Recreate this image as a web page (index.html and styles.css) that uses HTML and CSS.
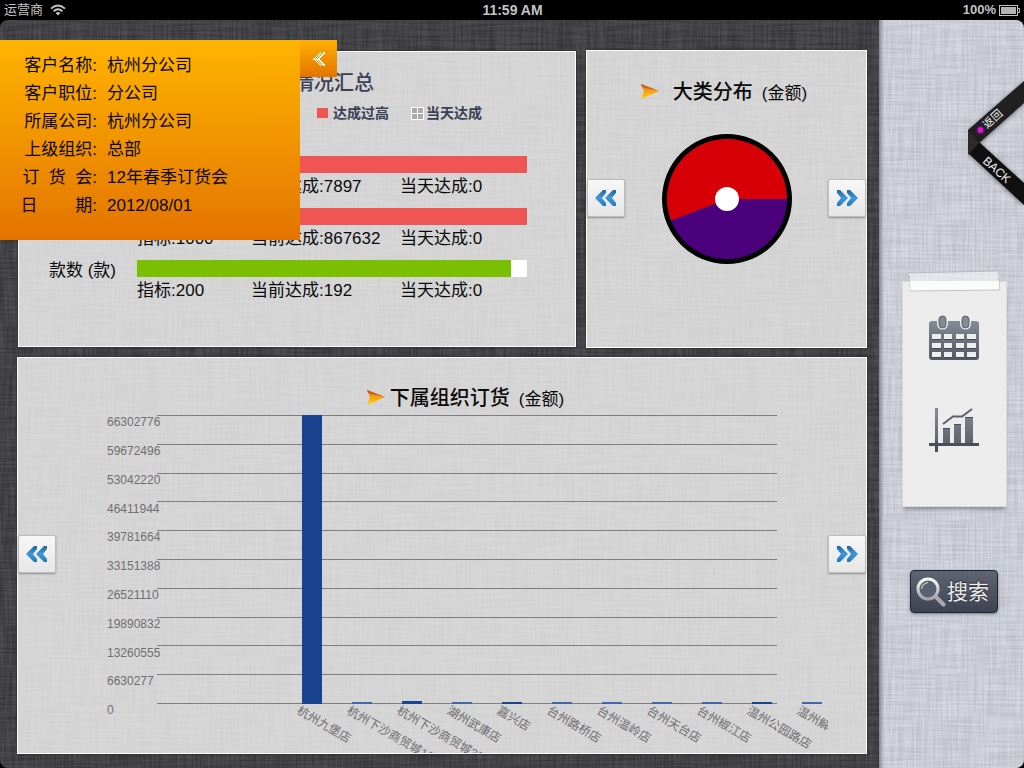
FILE: index.html
```html
<!DOCTYPE html>
<html lang="zh-CN">
<head>
<meta charset="utf-8">
<meta name="viewport" content="width=device-width, initial-scale=1">
<title>订货情况汇总</title>
<link rel="stylesheet" href="styles.css">
</head>
<body>
<header class="status">
  <div class="status-left"><span>运营商</span>
    <svg class="wifi" viewBox="0 0 16 12" aria-hidden="true"><path d="M1 4.6Q8-1.6 15 4.6M3.6 7.2Q8 3.4 12.4 7.2" fill="none" stroke="#c4c4c4" stroke-width="1.9"/><path d="M5.6 9Q8 7 10.4 9L8 11.6z" fill="#c4c4c4"/></svg>
  </div>
  <time class="clock">11:59 AM</time>
  <div class="status-right"><span>100%</span>
    <svg class="battery" viewBox="0 0 22 11" aria-hidden="true"><rect x=".5" y=".5" width="18" height="10" fill="none" stroke="#c4c4c4"/><rect x="2" y="2" width="15" height="7" fill="#b4b4b4"/><path d="M19 3.5h1.5v4H19" fill="none" stroke="#c4c4c4"/></svg>
  </div>
</header>

<div class="app">
  <main class="board">
    <section class="panel summary">
      <h2 class="summary-title">情况汇总</h2>
      <div class="legend">
        <span class="legend-item"><i class="swatch"></i>达成过高</span>
        <span class="legend-item today"><svg class="tiles" viewBox="0 0 13 13" aria-hidden="true"><path fill="#fff" d="M0 0h13v13H0z"/><path fill="#aaa" d="M1 1h5v5H1zM7 1h5v5H7zM1 7h5v5H1zM7 7h5v5H7z"/></svg>当天达成</span>
      </div>
      <div class="metric">
        <span class="metric-name"></span>
        <div class="track"><div class="fill over" style="width:100%"></div></div>
        <div class="figures"><span></span><span>当前达成:7897</span><span>当天达成:0</span></div>
      </div>
      <div class="metric">
        <span class="metric-name"></span>
        <div class="track"><div class="fill over" style="width:100%"></div></div>
        <div class="figures"><span>指标:1000</span><span>当前达成:867632</span><span>当天达成:0</span></div>
      </div>
      <div class="metric">
        <span class="metric-name">款数 (款)</span>
        <div class="track"><div class="fill" style="width:96%"></div></div>
        <div class="figures"><span>指标:200</span><span>当前达成:192</span><span>当天达成:0</span></div>
      </div>
    </section>

    <section class="panel slider">
      <button class="step" type="button" aria-label="上一个"><svg viewBox="0 0 22 18"><use href="#chevrons"/></svg></button>
      <div class="slide">
        <h2 class="heading spaced"><svg class="dart" viewBox="0 0 20 16" aria-hidden="true"><use href="#dart"/></svg><span>大类分布</span><small>(金额)</small></h2>
        <svg class="pie" viewBox="0 0 130 130" role="img" aria-label="大类分布">
          <circle cx="65" cy="65" r="65"/>
          <circle cx="65" cy="65" r="60" fill="#4b007c"/>
          <path fill="#d60006" d="M65 65H125A60 60 0 1 0 9 86.500z"/>
          <circle cx="65" cy="65" r="12" fill="#fff"/>
        </svg>
      </div>
      <button class="step" type="button" aria-label="下一个"><svg class="flip" viewBox="0 0 22 18"><use href="#chevrons"/></svg></button>
    </section>

    <section class="panel slider orders">
      <button class="step" type="button" aria-label="上一组"><svg viewBox="0 0 22 18"><use href="#chevrons"/></svg></button>
      <div class="slide">
        <h2 class="heading"><svg class="dart" viewBox="0 0 20 16" aria-hidden="true"><use href="#dart"/></svg><span>下属组织订货</span><small>(金额)</small></h2>
        <svg class="bars" viewBox="0 0 772 339" preserveAspectRatio="xMidYMin meet" role="img" aria-label="下属组织订货">
          <path class="grid-line" d="M101 1h620v1H101zM101 30h620v1H101zM101 59h620v1H101zM101 87h620v1H101zM101 116h620v1H101zM101 145h620v1H101zM101 174h620v1H101zM101 203h620v1H101zM101 231h620v1H101zM101 260h620v1H101zM101 289h620v1H101z"/>
          <g class="scale">
            <text x="51" y="12">66302776</text><text x="51" y="41">59672496</text><text x="51" y="70">53042220</text><text x="51" y="99">46411944</text><text x="51" y="127">39781664</text><text x="51" y="156">33151388</text><text x="51" y="185">26521110</text><text x="51" y="214">19890832</text><text x="51" y="243">13260555</text><text x="51" y="271">6630277</text><text x="51" y="300">0</text>
          </g>
          <path fill="#1a438f" d="M246 1h20v289h-20zM346 287h20v3h-20zM446 288h20v2h-20zM696 288h20v2h-20z"/>
          <path fill="#4067aa" d="M296 288h20v2h-20zM396 288h20v2h-20zM496 288h20v2h-20zM546 288h20v2h-20zM596 288h20v2h-20zM646 288h20v2h-20zM746 288h20v2h-20z"/>
          <g class="stores">
            <text transform="translate(240 299) rotate(30)">杭州九堡店</text>
            <text transform="translate(290 299) rotate(30)">杭州下沙商贸城1店</text>
            <text transform="translate(340 299) rotate(30)">杭州下沙商贸城3店</text>
            <text transform="translate(390 299) rotate(30)">湖州武康店</text>
            <text transform="translate(440 299) rotate(30)">嘉兴店</text>
            <text transform="translate(490 299) rotate(30)">台州路桥店</text>
            <text transform="translate(540 299) rotate(30)">台州温岭店</text>
            <text transform="translate(590 299) rotate(30)">台州天台店</text>
            <text transform="translate(640 299) rotate(30)">台州椒江店</text>
            <text transform="translate(690 299) rotate(30)">温州公园路店</text>
            <text transform="translate(740 299) rotate(30)">温州解</text>
          </g>
        </svg>
      </div>
      <button class="step" type="button" aria-label="下一组"><svg class="flip" viewBox="0 0 22 18"><use href="#chevrons"/></svg></button>
    </section>
  </main>

  <aside class="side">
    <nav class="note">
      <svg class="tape" viewBox="0 0 94 22" preserveAspectRatio="none" aria-hidden="true">
        <path fill="#fff" fill-opacity=".5" stroke="#aaa" stroke-opacity=".6" d="M1 3L92 1l-1 3 2 2-2 3 2 3-1 3 1 5L3 21l1-3-2-2 2-3-2-3 1-3-2-2z"/><path fill="#fff" fill-opacity=".6" d="M3 11h89v8L3 20z"/>
      </svg>
      <a class="tool" href="#calendar" aria-label="日历">
        <svg viewBox="0 0 50 46"><rect y="6" width="50" height="39" rx="3" fill="url(#steel)"/><path fill="#eee" d="M3 19h9v5H3zM15 19h8v5h-8zM27 19h8v5h-8zM38 19h9v5h-9zM3 28h9v5H3zM15 28h8v5h-8zM27 28h8v5h-8zM38 28h9v5h-9zM3 37h9v5H3zM15 37h8v5h-8zM27 37h8v5h-8zM38 37h9v5h-9z"/><path stroke="#454853" d="M3 24.500h9M15 24.500h8M27 24.500h8M38 24.500h9M3 33.500h9M15 33.500h8M27 33.500h8M38 33.500h9M3 42.500h9M15 42.500h8M27 42.500h8M38 42.500h9"/><path fill="#eee" d="M8 5h11v4a5.500 5.500 0 0 1-11 0zM31 5h11v4a5.500 5.500 0 0 1-11 0z"/><rect x="10" y="1" width="7" height="12" rx="3.500" fill="#858993" stroke="#5b5e69"/><rect x="33" y="1" width="7" height="12" rx="3.500" fill="#858993" stroke="#5b5e69"/></svg>
      </a>
      <a class="tool" href="#chart" aria-label="图表">
        <svg viewBox="0 0 50 46"><path fill="url(#steel)" d="M6 0h3v44H6zM14 20h7v16h-7zM25 16h7v20h-7zM36 9h8v27h-8z"/><path fill="#4b4e59" d="M0 35h50v3H0zM6 33h3v11H6zM14 20h7v1h-7zM25 16h7v1h-7zM36 9h8v1h-8z"/><path d="M14 16L24 8.500h9L43 1" fill="none" stroke="#5d606b" stroke-width="2"/></svg>
      </a>
    </nav>
    <button class="search" type="button">
      <svg viewBox="0 0 30 30" aria-hidden="true"><path d="M19 19l8.500 8.500" stroke="#aaa" stroke-width="4" stroke-linecap="round"/><circle cx="12" cy="12" r="10" fill="#59606f" stroke="url(#rim)" stroke-width="3"/><path d="M5.500 12A7 7 0 0 1 12 5.500" fill="none" stroke="#bbb" stroke-width="1.500"/></svg>
      <span>搜索</span>
    </button>
    <a class="ribbon" href="#back">
      <svg viewBox="0 0 56 126" aria-hidden="true">
        <g class="ribbon-shade"><path d="M0 73V66l11-4 45 41v22z" fill="#101011"/><path d="M0 73V50L56 1v22z" fill="#202021"/></g>
        <path d="M0 75V50l11 13z" fill="#2b2b2c"/>
        <circle cx="12.500" cy="50" r="3" fill="#e012dc"/><circle cx="12.500" cy="50" r="4" fill="none" stroke="#7d137b" stroke-opacity=".6"/>
        <text class="back-zh" transform="translate(19 49) rotate(-42)">返回</text>
        <text class="back-en" transform="translate(14 82) rotate(42)">BACK</text>
      </svg>
    </a>
  </aside>

  <section class="customer">
    <dl class="details">
      <dt>客户名称:</dt><dd>杭州分公司</dd>
      <dt>客户职位:</dt><dd>分公司</dd>
      <dt>所属公司:</dt><dd>杭州分公司</dd>
      <dt>上级组织:</dt><dd>总部</dd>
      <dt>订  货  会:</dt><dd>12年春季订货会</dd>
      <dt>日        期:</dt><dd>2012/08/01</dd>
    </dl>
    <button class="collapse" type="button" aria-label="收起"><svg viewBox="0 0 12 14"><path fill="#fff" d="M7 0h1v1h2V0h2v2h-1v1h-1v1H9v1H8v1H7v2h1v1h1v1h1v1h1v1h1v2h-2v-1H8v1H7v-1H6v-1H5v-1H4v-1H3V9H2V8H0V6h2V5h1V4h1V3h1V2h1V1h1z"/><path fill="#f0930a" d="M7 1h1v1H7zM9 1h1v1H9zM6 2h1v1H6zM8 2h1v1H8zM5 3h1v1H5zM7 3h1v1H7zM4 4h1v1H4zM6 4h1v1H6zM3 5h1v1H3zM5 5h1v1H5zM2 6h1v1H2zM4 6h1v1H4zM3 8h1v1H3zM5 8h1v1H5zM4 9h1v1H4zM6 9h1v1H6zM5 10h1v1H5zM7 10h1v1H7zM6 11h1v1H6zM8 11h1v1H8zM7 12h1v1H7z"/></svg></button>
  </section>
</div>

<svg class="defs" width="0" height="0" aria-hidden="true">
  <defs>
    <linearGradient id="blue" x2="0" y2="1"><stop stop-color="#1e6699"/><stop offset=".5" stop-color="#4098d8"/><stop offset="1" stop-color="#2478b8"/></linearGradient>
    <linearGradient id="flame" x2="0" y2="1"><stop stop-color="#d8601a"/><stop offset=".45" stop-color="#f2a010"/><stop offset="1" stop-color="#ffd400"/></linearGradient>
    <linearGradient id="steel" x2="0" y2="1"><stop stop-color="#858a95"/><stop offset="1" stop-color="#555863"/></linearGradient>
    <linearGradient id="rim" x2="0" y2="1"><stop stop-color="#fff"/><stop offset="1" stop-color="#a0a2a8"/></linearGradient>
    <path id="chevrons" fill="url(#blue)" d="M8 1h3v3L7 9l4 5v3H8L0 9zM18 1h3v3l-4 5 4 5v3h-3l-8-8z"/>
    <g id="dart"><path fill="url(#flame)" d="M1 0l18 7L1 15l3-8z"/><path fill="#c85b22" d="M1 0l18 7L2 3z"/></g>
  </defs>
</svg>
</body>
</html>
```
FILE: styles.css
```css
:root {
  --linen: url("data:image/svg+xml,%3Csvg xmlns='http://www.w3.org/2000/svg' width='300' height='300'%3E%3Cfilter id='h' x='0' y='0' width='1' height='1' color-interpolation-filters='sRGB'%3E%3CfeTurbulence type='fractalNoise' baseFrequency='.02 .5' numOctaves='2' seed='3' stitchTiles='stitch'/%3E%3CfeColorMatrix values='2.4 0 0 0 -.7 2.4 0 0 0 -.7 2.4 0 0 0 -.7 0 0 0 0 1'/%3E%3C/filter%3E%3Cfilter id='v' x='0' y='0' width='1' height='1' color-interpolation-filters='sRGB'%3E%3CfeTurbulence type='fractalNoise' baseFrequency='.5 .02' numOctaves='2' seed='8' stitchTiles='stitch'/%3E%3CfeColorMatrix values='2.4 0 0 0 -.7 2.4 0 0 0 -.7 2.4 0 0 0 -.7 0 0 0 0 1'/%3E%3C/filter%3E%3Crect width='300' height='300' filter='url(%23h)' opacity='.06'/%3E%3Crect width='300' height='300' filter='url(%23v)' opacity='.06'/%3E%3C/svg%3E");
}
* { box-sizing: border-box; }
html, body { height: 100%; margin: 0; }
body {
  display: flex;
  flex-direction: column;
  background: #000;
  color: #0a0a0a;
  font-family: "Liberation Sans", "Noto Sans CJK SC", sans-serif;
  font-size: 17px;
}
h2, dl, dd { margin: 0; }
button { padding: 0; font: inherit; cursor: pointer; }
svg { display: block; }
.defs { position: absolute; }

.status {
  display: grid;
  grid-template-columns: 1fr auto 1fr;
  align-items: center;
  height: 20px;
  padding: 0 3px 0 4px;
  color: #c4c4c4;
  font-size: 13px;
  line-height: 20px;
}
.status-left { display: flex; align-items: center; gap: 7px; }
.status-right { display: flex; align-items: center; justify-content: flex-end; gap: 3px; font-weight: bold; }
.clock { font-size: 14px; font-weight: bold; }
.wifi { width: 16px; height: 12px; }
.battery { width: 22px; height: 11px; }

.app {
  position: relative;
  flex: 1;
  display: flex;
  min-height: 0;
  border-radius: 8px;
  overflow: hidden;
}
.board {
  flex: 1;
  min-width: 0;
  display: grid;
  grid-template-columns: minmax(0, 1fr) 281px;
  grid-template-rows: minmax(0, 3fr) minmax(0, 4fr);
  gap: 9px;
  padding: 30px 12px 14px 17px;
  background: var(--linen), #3a393e;
}
.panel {
  min-width: 0;
  border: 1px solid #fff;
  background: linear-gradient(rgba(214,214,214,.75), rgba(214,214,214,.75)), var(--linen), #dadada;
  box-shadow: 0 0 2px #1c1c20;
}

.summary { margin: 1px 1px 1px 1px; padding: 16px 48px 0 23px; }
.summary-title {
  padding-left: 252px;
  color: #3a3f57;
  font-size: 20px;
  font-weight: 500;
  line-height: 30px;
}
.legend {
  display: flex;
  gap: 22px;
  margin-bottom: 28px;
  padding-left: 275px;
  color: #3a3f57;
  font-size: 14px;
  font-weight: bold;
  line-height: 30px;
}
.legend-item { display: flex; align-items: center; gap: 5px; }
.legend-item.today { gap: 2px; }
.swatch { width: 11px; height: 10px; background: #ef5552; }
.tiles { width: 13px; height: 13px; }
.metric {
  display: grid;
  grid-template-columns: 74px 1fr;
  column-gap: 21px;
  padding-bottom: 7px;
}
.metric-name { height: 17px; text-align: right; line-height: 22px; white-space: nowrap; }
.track { height: 17px; background: #fff; }
.fill { height: 100%; background: #7abf00; }
.fill.over { background: #ef5552; }
.figures {
  grid-column: 2;
  display: grid;
  grid-template-columns: 114px 149px 1fr;
  line-height: 28px;
  white-space: nowrap;
}

.slider { display: flex; align-items: center; }
.slide {
  flex: 1;
  align-self: stretch;
  min-width: 0;
  display: flex;
  flex-direction: column;
  align-items: center;
}
.step {
  display: grid;
  place-items: center;
  width: 38px;
  height: 38px;
  margin-bottom: 2px;
  border: 1px solid #bdbdbd;
  border-radius: 2px;
  background: linear-gradient(#f7f7f7, #e6e6e6);
  box-shadow: 0 1px 2px #8c8c8c;
}
.step svg { width: 22px; height: 18px; }
.flip { transform: scaleX(-1); }
.heading {
  display: flex;
  align-items: center;
  gap: 4px;
  padding-top: 24px;
  font-size: 20px;
  font-weight: 500;
  line-height: 32px;
  white-space: nowrap;
}
.heading small { padding: 4px 0 0 5px; font-size: 17px; font-weight: 400; line-height: 30px; }
.heading.spaced { gap: 13px; padding-right: 6px; }
.heading.spaced small { padding-left: 0; margin-left: -4px; }
.dart { width: 20px; height: 16px; }
.pie { width: 130px; height: 130px; margin-top: 25px; }
.orders { grid-column: 1 / -1; }
.orders .heading { height: 56px; padding-left: 46px; }
.bars { flex: 1; width: 100%; min-height: 0; overflow: hidden; }
.grid-line { fill: #7e7e7e; }
.scale, .stores { fill: #6e6e6e; font-size: 12px; }

.side {
  position: relative;
  width: 145px;
  display: flex;
  flex-direction: column;
  align-items: center;
  padding: 250px 0 0 5px;
  background:
    linear-gradient(90deg, #85868d 0, rgba(133,134,141,0) 5px),
    var(--linen),
    #d2d4df;
}
.note {
  display: flex;
  flex-direction: column;
  align-items: center;
  gap: 47px;
  width: 105px;
  margin-top: 11px;
  padding-bottom: 52px;
  border: 1px solid #dadada;
  background: #ececec;
  box-shadow: 0 4px 4px -2px rgba(80,82,95,.6);
}
.tape { width: 94px; height: 22px; margin: -12px 0 -24px; }
.tool svg { width: 50px; height: 46px; }
.search {
  display: flex;
  align-items: center;
  justify-content: center;
  gap: 1px;
  width: 88px;
  height: 43px;
  margin-top: 63px;
  padding-right: 3px;
  border: 1px solid #20242c;
  border-radius: 4px;
  background: linear-gradient(#5f6573, #3d4350);
  box-shadow: 0 1px 3px #777b87;
  color: #ececec;
  font-size: 21px;
  line-height: 30px;
  text-shadow: 0 -1px 1px #22252c;
}
.search svg { width: 30px; height: 30px; }
.ribbon { position: absolute; top: 60px; right: 0; }
.ribbon svg { width: 56px; height: 126px; }
.ribbon-shade { filter: drop-shadow(0 1px 2px rgba(40,40,50,.6)); }
.ribbon text { fill: #f2f2f2; }
.back-zh { font-size: 11px; }
.back-en { font-size: 12px; }

.customer {
  position: absolute;
  top: 20px;
  left: 0;
  display: flex;
  align-items: flex-start;
}
.details {
  display: grid;
  grid-template-columns: 97px 1fr;
  column-gap: 10px;
  width: 300px;
  padding: 12px 0 20px;
  background: linear-gradient(#ffb400, #e37400);
  line-height: 28px;
}
.details dt { text-align: right; white-space: pre; }
.collapse {
  display: grid;
  place-items: center;
  width: 37px;
  height: 37px;
  border: 0;
  background: linear-gradient(#ffb000, #e37400);
}
.collapse svg { width: 12px; height: 14px; }
```
